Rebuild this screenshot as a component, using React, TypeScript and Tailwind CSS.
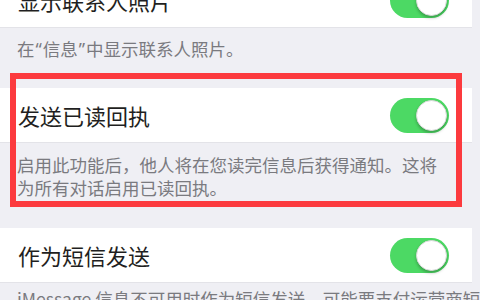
import React from "react";

const font = { fontFamily: '"Noto Sans CJK SC", "Noto Sans", sans-serif' };

function Toggle() {
  return (
    <div className="relative w-[59px] h-[35px] rounded-full bg-[#4cd964] shrink-0">
      <div className="absolute right-[2px] top-[2px] w-[31px] h-[31px] rounded-full bg-white border border-[#d9d9d9] shadow-[0_2px_3px_rgba(0,0,0,0.25)]" />
    </div>
  );
}

function Row({ title, className = "" }: { title: string; className?: string }) {
  return (
    <div
      className={`flex items-center justify-between bg-white pl-[18px] pr-[23px] h-[55px] border-b border-[#e3e3e8] ${className}`}
    >
      <span className="text-[22px] leading-[28px] text-[#1f1f21]">{title}</span>
      <Toggle />
    </div>
  );
}

const q = "font-['Noto_Sans',sans-serif] mx-[1px]";

export default function App() {
  return (
    <div
      className="relative w-[480px] h-[300px] overflow-hidden bg-[#efeff4]"
      style={font}
    >
      <div className="w-[472px] flex flex-col">
        <Row title="显示联系人照片" className="mt-[-27px]" />
        <div className="h-[60px] pl-[17px] pt-[10px] text-[17.5px] leading-[22px] text-[#7a7a7f]">
          在<span className={q}>“</span>信息<span className={q}>”</span>中显示联系人照片。
        </div>
        <Row title="发送已读回执" />
        <div className="h-[85px] pl-[17px] pt-[10px] text-[17.5px] leading-[23px] text-[#7a7a7f] whitespace-nowrap">
          启用此功能后，他人将在您读完信息后获得通知。这将
          <br />
          为所有对话启用已读回执。
        </div>
        <Row title="作为短信发送" />
        <div className="pl-[17px] pt-[5px] text-[17.5px] leading-[22px] text-[#7a7a7f] whitespace-nowrap">
          iMessage 信息不可用时作为短信发送，可能要支付运营商短信费用。
        </div>
      </div>
      <div className="absolute left-[10px] top-[73px] w-[452px] h-[134px] border-[6px] border-[#fc3a3e]" />
    </div>
  );
}
